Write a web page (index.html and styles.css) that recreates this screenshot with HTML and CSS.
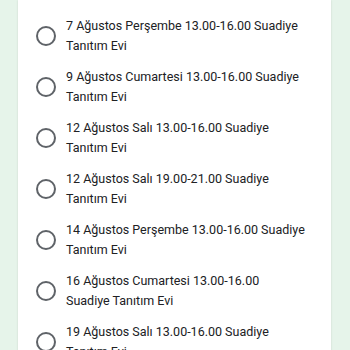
FILE: index.html
```html
<!DOCTYPE html>
<html lang="tr">
<head>
  <meta charset="UTF-8" />
  <meta name="viewport" content="width=device-width, initial-scale=1.0"/>
  <title>Tanıtım Günleri</title>
  <link rel="stylesheet" href="styles.css">
</head>
<body>
  <div class="card">
    <div class="options">
      <label class="option">
        <span class="radio"></span>
        <span class="option-text">7 Ağustos Perşembe 13.00-16.00 Suadiye Tanıtım Evi</span>
      </label>
      <label class="option">
        <span class="radio"></span>
        <span class="option-text">9 Ağustos Cumartesi 13.00-16.00 Suadiye Tanıtım Evi</span>
      </label>
      <label class="option">
        <span class="radio"></span>
        <span class="option-text">12 Ağustos Salı 13.00-16.00 Suadiye Tanıtım Evi</span>
      </label>
      <label class="option">
        <span class="radio"></span>
        <span class="option-text">12 Ağustos Salı 19.00-21.00 Suadiye Tanıtım Evi</span>
      </label>
      <label class="option">
        <span class="radio"></span>
        <span class="option-text">14 Ağustos Perşembe 13.00-16.00 Suadiye Tanıtım Evi</span>
      </label>
      <label class="option">
        <span class="radio"></span>
        <span class="option-text">16 Ağustos Cumartesi 13.00-16.00 Suadiye Tanıtım Evi</span>
      </label>
      <label class="option">
        <span class="radio"></span>
        <span class="option-text">19 Ağustos Salı 13.00-16.00 Suadiye Tanıtım Evi</span>
      </label>
    </div>
  </div>
</body>
</html>
```

FILE: styles.css
```css
body {
  margin: 0;
  background: #e6f4ea;
  font-family: Roboto, Arial, sans-serif;
  color: #202124;
}

.card {
  background: #fff;
  margin: 0 19px 0 18px;
  padding: 16px 0 16px 0;
  box-shadow: 0 0 2px rgba(0,0,0,0.12);
}

.options {
  display: flex;
  flex-direction: column;
  gap: 11px;
}

.option {
  display: flex;
  align-items: center;
  padding-left: 18px;
  cursor: pointer;
}

.radio {
  flex: none;
  width: 16px;
  height: 16px;
  border: 2px solid #5f6368;
  border-radius: 50%;
  margin-right: 10px;
}

.option-text {
  width: 239px;
  font-size: 12.5px;
  line-height: 20px;
}
```
